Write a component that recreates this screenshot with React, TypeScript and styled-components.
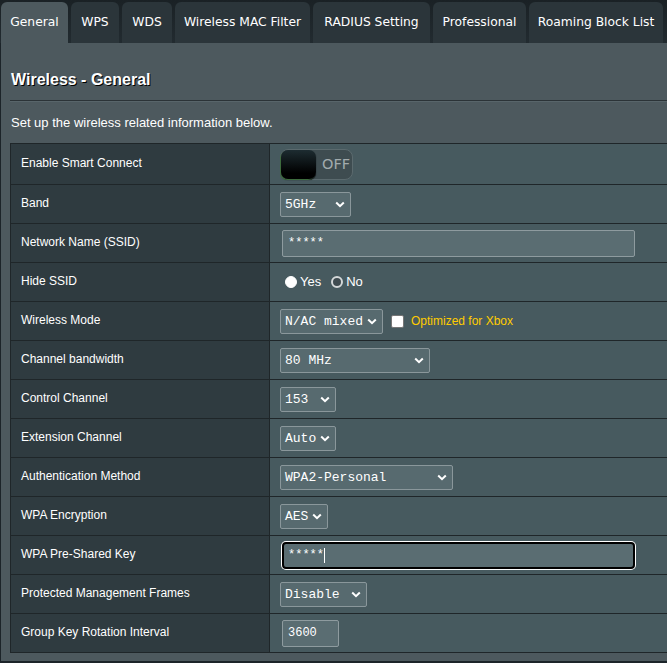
import React from "react";
import styled, { createGlobalStyle } from "styled-components";

const Global = createGlobalStyle`
  html, body { margin: 0; padding: 0; overflow: hidden; background: #1c2429; }
  body { width: 667px; height: 663px; }
  * { box-sizing: border-box; }
`;

const Page = styled.div`
  width: 667px;
  height: 663px;
  padding-left: 1px;
  display: flex;
  flex-direction: column;
  overflow: hidden;
  background: linear-gradient(#1a2125, #222b30 43px, #1c2429 43px);
`;

const TabBar = styled.div`
  display: flex;
  gap: 3px;
  padding-top: 2px;
  height: 43px;
  flex: none;
`;

const Tab = styled.div<{ $active?: boolean; $w: number }>`
  width: ${(p) => p.$w}px;
  height: 41px;
  padding-bottom: 2px;
  display: flex;
  align-items: center;
  justify-content: center;
  border-radius: 6px 6px 0 0;
  background: ${(p) => (p.$active ? "#4d595e" : "#2b353a")};
  color: #fff;
  font: 12.3px "DejaVu Sans", Verdana, sans-serif;
  white-space: nowrap;
  flex: none;
`;

const Panel = styled.div`
  background: #4d595e;
  width: 700px;
  padding: 0 0 8px 9px;
  flex: none;
`;

const Heading = styled.h1`
  margin: 28px 0 0 1px;
  height: 20px;
  line-height: 20px;
  font: bold 16px "Liberation Sans", Arial, sans-serif;
  color: #fff;
  text-shadow: 1px 1px 0 #000;
`;

const Rule = styled.div`
  margin-top: 9px;
  height: 2px;
  border-top: 1px solid #2b3337;
  border-bottom: 1px solid #58656a;
`;

const Description = styled.div`
  margin: 13px 0 0 1px;
  height: 16px;
  line-height: 16px;
  font: 13px "Liberation Sans", Arial, sans-serif;
  color: #fff;
`;

const Table = styled.div`
  margin-top: 12px;
  border: 1px solid #1f2629;
  border-bottom: none;
  border-right: none;
`;

const Row = styled.div<{ $h: number }>`
  display: grid;
  grid-template-columns: 259px 1fr;
  height: ${(p) => p.$h + 1}px;
  border-bottom: 1px solid #1f2629;
`;

const Label = styled.div`
  background: #2f3b40;
  border-right: 1px solid #1f2629;
  padding: 0 0 2px 10px;
  display: flex;
  align-items: center;
  font: 12px "Liberation Sans", Arial, sans-serif;
  color: #fff;
`;

const Value = styled.div`
  background: #475a5f;
  padding-left: 10px;
  display: flex;
  align-items: center;
  font: 13px "Liberation Sans", Arial, sans-serif;
  color: #fff;
`;

const Toggle = styled.div`
  width: 73px;
  height: 31px;
  border: 1px solid #5b6a6e;
  border-radius: 8px;
  background: #3e4c50;
  display: flex;
  align-items: center;
`;

const Knob = styled.div`
  width: 35px;
  height: 29px;
  border-radius: 7px;
  background: linear-gradient(#1d2c31, #000 80%);
  box-shadow: -1px 1px 0 #3d6b3d, 0 1px 1px #000;
`;

const ToggleText = styled.span`
  margin-left: 6px;
  font: 14.5px "DejaVu Sans", Verdana, sans-serif;
  color: #a2abad;
`;

const SelectBox = styled.div<{ $w: number }>`
  width: ${(p) => p.$w}px;
  height: 25px;
  border: 1px solid #8a979b;
  border-radius: 2px;
  background: #576a6f;
  padding: 0 5px 0 4px;
  display: flex;
  align-items: center;
  justify-content: space-between;
  font: 13px "Liberation Mono", "DejaVu Sans Mono", monospace;
  color: #fff;
  white-space: pre;
`;

const TextBox = styled.div<{ $w: number; $focus?: boolean }>`
  width: ${(p) => p.$w}px;
  height: 27px;
  margin-left: 2px;
  border: ${(p) => (p.$focus ? "2px solid #000" : "1px solid #8e9b9f")};
  border-radius: ${(p) => (p.$focus ? "4px" : "2px")};
  box-shadow: ${(p) => (p.$focus ? "0 0 0 1px #fff" : "none")};
  background: #5a6d72;
  padding-left: ${(p) => (p.$focus ? "4px" : "5px")};
  display: flex;
  align-items: center;
  font: 12px "Liberation Mono", "DejaVu Sans Mono", monospace;
  color: #fff;
`;

const Caret = styled.span`
  display: inline-block;
  width: 1px;
  height: 15px;
  background: #fff;
`;

const RadioDot = styled.span<{ $on?: boolean }>`
  width: 12px;
  height: 12px;
  border-radius: 50%;
  margin: 0 3px 0 5px;
  background: ${(p) => (p.$on ? "#fff" : "#3f4b50")};
  border: ${(p) => (p.$on ? "1px solid #fff" : "2px solid #d4d8d9")};
  flex: none;
`;

const RadioText = styled.span`
  margin-right: 5px;
  line-height: 16px;
`;

const CheckBox = styled.span`
  width: 13px;
  height: 13px;
  margin: 0 7px 0 8px;
  background: #fff;
  border-radius: 2px;
  border: 1px solid #767676;
  flex: none;
`;

const Note = styled.span`
  color: #ffcc00;
  font-size: 12px;
`;

const Chevron = () => (
  <svg width="10" height="7" viewBox="0 0 10 7">
    <polyline points="1.2,1.5 5,5.2 8.8,1.5" fill="none" stroke="#fff" strokeWidth="2" />
  </svg>
);

const Select = ({ w, v }: { w: number; v: string }) => (
  <SelectBox $w={w}>
    <span>{v}</span>
    <Chevron />
  </SelectBox>
);

const tabs: [string, number][] = [
  ["General", 67],
  ["WPS", 48],
  ["WDS", 50],
  ["Wireless MAC Filter", 135],
  ["RADIUS Setting", 117],
  ["Professional", 93],
  ["Roaming Block List", 134],
];

export default function App() {
  return (
    <>
      <Global />
      <Page>
        <TabBar>
          {tabs.map(([t, w], i) => (
            <Tab key={t} $w={w} $active={i === 0}>
              {t}
            </Tab>
          ))}
        </TabBar>
        <Panel>
          <Heading>Wireless - General</Heading>
          <Rule />
          <Description>Set up the wireless related information below.</Description>
          <Table>
            <Row $h={40}>
              <Label>Enable Smart Connect</Label>
              <Value>
                <Toggle>
                  <Knob />
                  <ToggleText>OFF</ToggleText>
                </Toggle>
              </Value>
            </Row>
            <Row $h={38}>
              <Label>Band</Label>
              <Value>
                <Select w={71} v="5GHz" />
              </Value>
            </Row>
            <Row $h={38}>
              <Label>Network Name (SSID)</Label>
              <Value>
                <TextBox $w={353}>*****</TextBox>
              </Value>
            </Row>
            <Row $h={38}>
              <Label>Hide SSID</Label>
              <Value>
                <RadioDot $on />
                <RadioText>Yes</RadioText>
                <RadioDot />
                <RadioText>No</RadioText>
              </Value>
            </Row>
            <Row $h={38}>
              <Label>Wireless Mode</Label>
              <Value>
                <Select w={103} v="N/AC mixed" />
                <CheckBox />
                <Note>Optimized for Xbox</Note>
              </Value>
            </Row>
            <Row $h={38}>
              <Label>Channel bandwidth</Label>
              <Value>
                <Select w={150} v="80 MHz" />
              </Value>
            </Row>
            <Row $h={38}>
              <Label>Control Channel</Label>
              <Value>
                <Select w={56} v="153" />
              </Value>
            </Row>
            <Row $h={38}>
              <Label>Extension Channel</Label>
              <Value>
                <Select w={56} v="Auto" />
              </Value>
            </Row>
            <Row $h={38}>
              <Label>Authentication Method</Label>
              <Value>
                <Select w={173} v="WPA2-Personal" />
              </Value>
            </Row>
            <Row $h={38}>
              <Label>WPA Encryption</Label>
              <Value>
                <Select w={48} v="AES" />
              </Value>
            </Row>
            <Row $h={38}>
              <Label>WPA Pre-Shared Key</Label>
              <Value>
                <TextBox $w={353} $focus>
                  *****
                  <Caret />
                </TextBox>
              </Value>
            </Row>
            <Row $h={38}>
              <Label>Protected Management Frames</Label>
              <Value>
                <Select w={87} v="Disable" />
              </Value>
            </Row>
            <Row $h={38}>
              <Label>Group Key Rotation Interval</Label>
              <Value>
                <TextBox $w={57}>3600</TextBox>
              </Value>
            </Row>
          </Table>
        </Panel>
      </Page>
    </>
  );
}
